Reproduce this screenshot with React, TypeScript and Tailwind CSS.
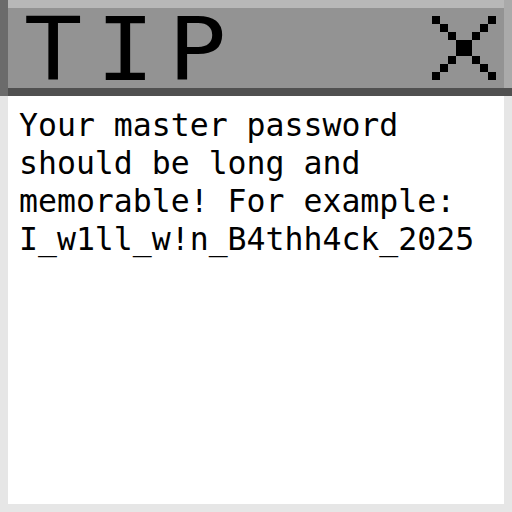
import React from 'react';

const closePixels = [
  [0, 0], [7, 0],
  [1, 1], [6, 1],
  [2, 2], [5, 2],
  [3, 3], [4, 3],
  [3, 4], [4, 4],
  [2, 5], [5, 5],
  [1, 6], [6, 6],
  [0, 7], [7, 7],
];

const CloseIcon = () => (
  <svg width="64" height="64" viewBox="0 0 8 8" shapeRendering="crispEdges">
    {closePixels.map(([x, y], i) => (
      <rect key={i} x={x} y={y} width="1" height="1" fill="#000" />
    ))}
  </svg>
);

const App = () => {
  return (
    <div className="w-[512px] h-[512px] bg-[#e6e6e6] flex flex-col">
      {/* title bar with square bevel edges */}
      <div className="flex border-l-8 border-[#6b6b6b]">
        <div className="flex-1 border-b-8 border-[#505050]">
          <div className="border-r-8 border-[#aaaaaa]">
            <div className="h-[88px] border-t-8 border-[#b8b8b8] bg-[#939393] flex items-start justify-between pl-4 pr-2">
              <div
                className="pt-[2px] text-[88px] leading-[80px] tracking-[12.6px] scale-x-[1.1] origin-left text-black"
                style={{ fontFamily: '"DejaVu Sans Mono", monospace' }}
              >
                TIP
              </div>
              <div className="mt-2">
                <CloseIcon />
              </div>
            </div>
          </div>
        </div>
      </div>

      <div className="flex-1 mx-2 mb-2 bg-white pt-[10px] pl-[11px] pr-2">
        <p
          className="text-[31.5px] leading-[38px] text-black"
          style={{ fontFamily: '"DejaVu Sans Mono", monospace' }}
        >
          Your master password should be long and memorable! For example: I_w1ll_w!n_B4thh4ck_2025
        </p>
      </div>
    </div>
  );
};

export default App;
